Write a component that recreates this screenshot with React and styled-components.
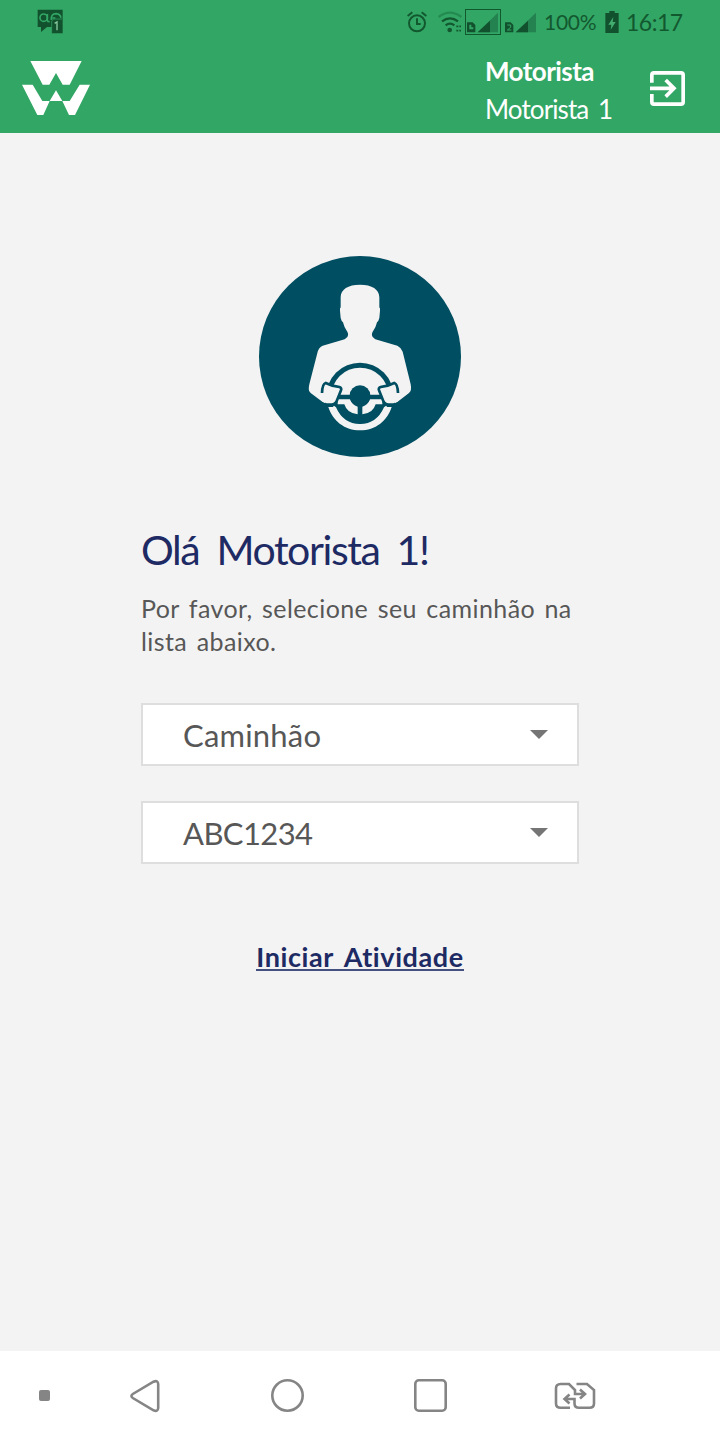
import React from 'react';
import styled, { createGlobalStyle } from 'styled-components';

const GlobalStyle = createGlobalStyle`
  * {
    box-sizing: border-box;
  }

  body {
    margin: 0;
    background: #f3f3f3;
    font-family: Lato, 'Liberation Sans', sans-serif;
    font-variant-ligatures: none;
  }

  svg {
    display: block;
    flex: none;
  }
`;

const Screen = styled.div`
  display: flex;
  flex-direction: column;
  width: 720px;
  height: 1440px;
  overflow: hidden;
`;

const Top = styled.header`
  height: 133px;
  background: #32a665;
`;

const StatusBar = styled.div`
  display: flex;
  align-items: center;
  height: 43px;
  padding: 0 37px;
  color: #12582f;
`;

const StatusIcons = styled.div`
  display: flex;
  align-items: center;
  margin-left: auto;
`;

const StatusText = styled.span`
  width: ${props => props.$width};
  margin-left: ${props => props.$gap};
  font-size: ${props => props.$size};
  letter-spacing: ${props => props.$spacing};
  line-height: 44px;
  white-space: nowrap;
`;

const AppBar = styled.div`
  display: flex;
  align-items: center;
  height: 90px;
  padding: 0 35px 0 22px;
`;

const User = styled.div`
  width: 165px;
  margin-left: auto;
  padding-top: 4px;
  color: #fff;
`;

const UserLine = styled.div`
  font-size: 26px;
  font-weight: ${props => (props.$bold ? 700 : 400)};
  letter-spacing: ${props => (props.$bold ? '-0.55px' : '-0.9px')};
  word-spacing: 4px;
  line-height: 38px;
  white-space: nowrap;
`;

const Content = styled.main`
  display: flex;
  flex: 1;
  flex-direction: column;
  align-items: center;
  padding-top: 123px;
`;

const Form = styled.div`
  display: flex;
  flex-direction: column;
  width: 438px;
  margin-top: 68px;
`;

const Title = styled.h1`
  margin: 0;
  color: #1e2a63;
  font-size: 41px;
  font-weight: 400;
  letter-spacing: -1.4px;
  word-spacing: 8px;
  line-height: 50px;
  white-space: nowrap;
`;

const Message = styled.p`
  margin: 17px 0 0;
  color: #575757;
  font-size: 25px;
  letter-spacing: 0.42px;
  word-spacing: 2.6px;
  line-height: 33px;
  white-space: nowrap;
`;

const Select = styled.div`
  display: flex;
  align-items: center;
  justify-content: space-between;
  height: 63px;
  margin-top: ${props => props.$gap};
  padding: 0 29px 0 40px;
  border: 2px solid #dedede;
  background: #fff;
  color: #575757;
  font-size: 31px;
  letter-spacing: ${props => props.$spacing};
`;

const Arrow = styled.span`
  border-top: 9px solid #757575;
  border-right: 9px solid transparent;
  border-left: 9px solid transparent;
`;

const Start = styled.a`
  align-self: center;
  margin-top: 81px;
  border-bottom: 2px solid #455080;
  color: #1e2a63;
  font-size: 27px;
  font-weight: 700;
  letter-spacing: 0.6px;
  word-spacing: 4px;
  line-height: 24px;
  white-space: nowrap;
`;

const NavBar = styled.nav`
  display: flex;
  align-items: center;
  height: 89px;
  padding-left: 39px;
  background: #fff;
`;

const NavItem = styled.div`
  margin-left: ${props => props.$gap};
`;

const Notification = () => (
  <svg width="26" height="25" viewBox="0 0 78 75">
    <path d="M2 2H77V73H44V54H30L12 69V54H2Z" fill="#12512d" />
    <g fill="none" stroke="#32a665" strokeWidth="5">
      <circle cx="20" cy="26" r="11" />
      <path d="M31 15V35Q32 38 38 38M43 33Q41 14 58 14Q69 15 72 26M46 27H55" />
      <path d="M44 73V36L50 30H75" strokeWidth="2" />
      <path d="M53 43L60 39V64" stroke="#8bc9a0" strokeWidth="4" />
    </g>
  </svg>
);

const Alarm = () => (
  <svg width="20" height="22" viewBox="0 0 60 66" fill="none" stroke="#12582f" strokeWidth="6">
    <circle cx="30" cy="37" r="24" />
    <path d="M30 22V39H41M2 15L16 4M44 4L58 15" />
  </svg>
);

const Wifi = () => (
  <svg width="24" height="22" viewBox="0 0 72 66" fill="none" stroke="#12582f" strokeWidth="7">
    <path d="M2 18Q36 -8 70 18" stroke="#248b50" />
    <path d="M12 31Q36 13 60 31M23 43Q36 33 49 43" />
    <circle cx="35" cy="57" r="7" fill="#12582f" stroke="none" />
    <path d="M55 46H61M64 46H69M55 59H61M64 59H69" strokeWidth="5" />
  </svg>
);

const Signal = ({ boxed }) => (
  <svg width="36" height="26" viewBox="0 0 108 78">
    {boxed && <rect x="1.5" y="1.5" width="105" height="75" fill="none" stroke="#12582f" strokeWidth="3" />}
    <path d="M38 70L99 11V70Z" fill="#248150" />
    <path d="M38 70L75 35V70Z" fill="#12512d" />
    <path d="M6 40H23L31 48V70H6Z" fill="#12512d" />
    {boxed ? (
      <path d="M13 47V61H25V55H19V47Z" fill="#32a665" />
    ) : (
      <path d="M13 48H23V55L13 63H25" fill="none" stroke="#32a665" strokeWidth="3" />
    )}
  </svg>
);

const Battery = () => (
  <svg width="14" height="22" viewBox="0 0 42 66">
    <path d="M13 0H29V6H41V66H1V6H13Z" fill="#12512d" />
    <path d="M25 18L10 41H19L17 56L32 33H23Z" fill="#43ad6f" />
  </svg>
);

const Logo = () => (
  <svg width="68" height="54" viewBox="66 183 204 162" fill="#fff">
    <path d="M91 183H245L209 254H188L168 219L148 254H128Z" />
    <path d="M66 254H98L127 303H149L168 271L187 303H209L239 254H270L225 345H207L187 303H149L130 345H112Z" />
  </svg>
);

const Exit = () => (
  <svg width="35" height="35" viewBox="0 0 105 105" fill="none" stroke="#fff" strokeWidth="11">
    <path d="M5.5 35V12Q5.5 5.5 12 5.5H93Q99.5 5.5 99.5 12V93Q99.5 99.5 93 99.5H12Q5.5 99.5 5.5 93V69" />
    <path d="M0 52H71M47 27L72 52L47 77" />
  </svg>
);

const Driver = () => (
  <svg width="202" height="201" viewBox="27 30 606 603">
    <ellipse cx="330" cy="331.5" rx="303" ry="301.5" fill="#004e61" />
    <path
      d="M330 116C294 116 272 130 272 154V184Q269 186 270 194L272 216Q274 225 279 229Q282 243 291 256Q297 265 292 273L284 280L218 299Q207 304 203 317L178 415Q173 434 182 441L217 467Q224 472 232 472H428Q436 472 443 467L477 441Q486 434 482 415L458 317Q453 304 442 299L376 280L368 273Q363 265 369 256Q378 243 381 229Q386 225 388 216L390 194Q391 186 388 184V154C388 130 366 116 330 116Z"
      fill="#f3f3f3"
    />
    <circle cx="330" cy="451" r="101" fill="#004e61" />
    <circle cx="330" cy="451" r="86" fill="#f3f3f3" />
    <path d="M226 446H434V474H226Z" fill="#004e61" />
    <path d="M235 483H425C412 525 376 553 330 553C284 553 248 525 235 483Z" fill="#f3f3f3" />
    <path d="M242 472H418L402 484Q380 534 330 534Q280 534 258 484Z" fill="#004e61" />
    <path d="M263 460H300Q306 477 323 482V505Q291 502 283 475H263Z" fill="#f3f3f3" />
    <path d="M397 460H360Q354 477 337 482V505Q369 502 377 475H397Z" fill="#f3f3f3" />
    <circle cx="330" cy="449" r="31" fill="#004e61" />
    <path d="M216 441Q216 411 228 411L247 419L270 424Q276 427 273 433L260 463Q256 472 245 472H230L216 466Z" fill="#f3f3f3" />
    <path d="M444 441Q444 411 432 411L413 419L390 424Q384 427 387 433L400 463Q404 472 415 472H430L444 466Z" fill="#f3f3f3" />
    <path
      d="M216 441Q217 414 227 411L247 419L268 423Q276 426 273 433L261 463Q257 474 247 477M444 441Q443 414 433 411L413 419L392 423Q384 426 387 433L399 463Q403 474 413 477"
      fill="none"
      stroke="#004e61"
      strokeWidth="8"
    />
  </svg>
);

const Back = () => (
  <svg width="32" height="34" viewBox="0 0 32 34" fill="none" stroke="#858585" strokeWidth="2.6">
    <path d="M3.8 15Q1 17 3.8 19L24.5 31.3Q29 33.2 29.2 29V5Q29 0.8 24.5 2.7Z" />
  </svg>
);

const Switch = () => (
  <svg width="42" height="28" viewBox="0 0 42 28" fill="none" stroke="#858585" strokeWidth="2.6">
    <path d="M16 25.8H6.5Q2 25.8 2 21.5V6.5Q2 2 6.5 2H15L21 8V12H30M26 7.5L31 12L26 16.5" />
    <path d="M22.5 2H33L40 8V21.5Q40 25.8 35.5 25.8H25Q20.5 25.8 20.5 21.5V17H11M15.5 12.5L10.5 17L15.5 21.5" />
  </svg>
);

const App = () => (
  <Screen>
    <GlobalStyle />
    <Top>
      <StatusBar>
        <Notification />
        <StatusIcons>
          <Alarm />
          <NavItem $gap="11px"><Wifi /></NavItem>
          <NavItem $gap="3px"><Signal boxed /></NavItem>
          <NavItem $gap="2px"><Signal /></NavItem>
          <StatusText $gap="5px" $width="53px" $size="21px" $spacing="-0.3px">100%</StatusText>
          <NavItem $gap="8px"><Battery /></NavItem>
          <StatusText $gap="7px" $width="57px" $size="23px" $spacing="-0.5px">16:17</StatusText>
        </StatusIcons>
      </StatusBar>
      <AppBar>
        <Logo />
        <User>
          <UserLine $bold>Motorista</UserLine>
          <UserLine>Motorista 1</UserLine>
        </User>
        <Exit />
      </AppBar>
    </Top>
    <Content>
      <Driver />
      <Form>
        <Title>Olá Motorista 1!</Title>
        <Message>
          Por favor, selecione seu caminhão na
          <br />
          lista abaixo.
        </Message>
        <Select $gap="45px" $spacing="0.2px">
          Caminhão
          <Arrow />
        </Select>
        <Select $gap="35px" $spacing="-0.6px">
          ABC1234
          <Arrow />
        </Select>
        <Start>Iniciar Atividade</Start>
      </Form>
    </Content>
    <NavBar>
      <svg width="11" height="11"><rect width="11" height="11" rx="2" fill="#858585" /></svg>
      <NavItem $gap="79px"><Back /></NavItem>
      <NavItem $gap="110px">
        <svg width="33" height="33"><circle cx="16.5" cy="16.5" r="15.2" fill="none" stroke="#858585" strokeWidth="2.6" /></svg>
      </NavItem>
      <NavItem $gap="110px">
        <svg width="33" height="33"><rect x="1.3" y="1.3" width="30.4" height="30.4" rx="3.5" fill="none" stroke="#858585" strokeWidth="2.6" /></svg>
      </NavItem>
      <NavItem $gap="107px"><Switch /></NavItem>
    </NavBar>
  </Screen>
);

export default App;
